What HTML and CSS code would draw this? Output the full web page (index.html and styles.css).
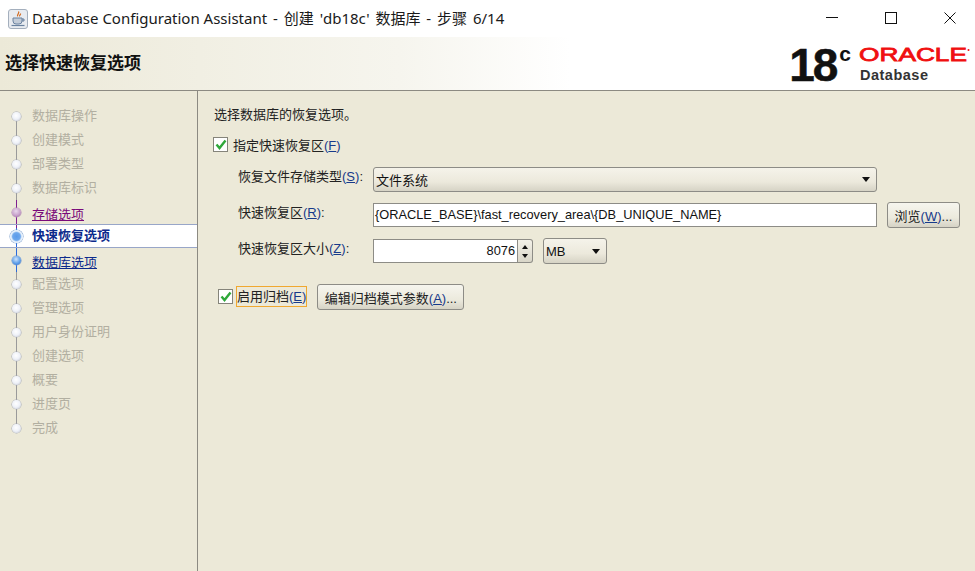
FILE: index.html
```html
<!DOCTYPE html>
<html lang="zh">
<head>
<meta charset="utf-8">
<title>Database Configuration Assistant</title>
<link rel="stylesheet" href="styles.css">
</head>
<body>
<div class="window">
  <header class="titlebar">
    <svg class="app-icon" width="22" height="22" viewBox="0 0 22 22">
      <rect x="1.500" y="1.500" width="19" height="19" rx="2.500" fill="#e8ebf0" stroke="#a4afbd"/>
      <path d="M11.500 3.500c1.500 1.500-2 3-.8 4.800M13.500 5.500c.6 1-1.500 1.800-.8 2.800" fill="none" stroke="#d2691e" stroke-width="1.200"/>
      <path d="M6 10h9v3a3 3 0 0 1-3 3H9a3 3 0 0 1-3-3zM15 11h2v2h-2" fill="#c3ccd8" stroke="#6a82a0"/>
      <path d="M4.500 17.500h13" stroke="#6a82a0" stroke-width="1.200"/>
    </svg>
    <span class="title-text">Database Configuration Assistant<span class="title-rest"> - 创建 'db18c' 数据库 - 步骤 6/14</span></span>
    <div class="winbtns">
      <svg width="12" height="12" viewBox="0 0 12 12"><path d="M0 5.500h12" stroke="#111"/></svg>
      <svg width="12" height="12" viewBox="0 0 12 12"><rect x=".5" y=".5" width="11" height="11" fill="none" stroke="#111"/></svg>
      <svg width="12" height="12" viewBox="0 0 12 12"><path d="M.5.500l11 11M11.500.500l-11 11" stroke="#111"/></svg>
    </div>
  </header>

  <section class="banner">
    <h1 class="banner-title">选择快速恢复选项</h1>
    <div class="brand">
      <span class="ver">18</span>
      <span class="ver-c">c</span>
      <div class="oracle">
        <svg class="oracle-word" width="112" height="22" viewBox="0 0 112 22">
          <text x="0" y="19" textLength="108" lengthAdjust="spacingAndGlyphs" class="oracle-text">ORACLE</text>
          <circle cx="109.500" cy="8" r="1" fill="#f01010"/>
        </svg>
        <span class="database">Database</span>
      </div>
    </div>
  </section>

  <main class="body">
    <nav class="steps">
      <div class="step off first">数据库操作</div>
      <div class="step off">创建模式</div>
      <div class="step off">部署类型</div>
      <div class="step off">数据库标识</div>
      <div class="step visited"><a>存储选项</a></div>
      <div class="step current">快速恢复选项</div>
      <div class="step next"><a>数据库选项</a></div>
      <div class="step off">配置选项</div>
      <div class="step off">管理选项</div>
      <div class="step off">用户身份证明</div>
      <div class="step off">创建选项</div>
      <div class="step off">概要</div>
      <div class="step off">进度页</div>
      <div class="step off last">完成</div>
    </nav>

    <section class="content">
      <p class="intro">选择数据库的恢复选项。</p>
      <label class="check-row">
        <span class="check"><svg width="12" height="11" viewBox="0 0 12 11"><path d="M1.500 5.500l3 3.500L10.500 1.500" fill="none" stroke="#2fa83a" stroke-width="2.400"/></svg></span>
        <span>指定快速恢复区<span class="mn">(<u>F</u>)</span></span>
      </label>

      <div class="form">
        <label class="lbl">恢复文件存储类型<span class="mn">(<u>S</u>)</span>:</label>
        <div class="combo wide"><span>文件系统</span><i class="caret"></i></div>
        <span></span>

        <label class="lbl">快速恢复区<span class="mn">(<u>R</u>)</span>:</label>
        <div class="input">{ORACLE_BASE}\fast_recovery_area\{DB_UNIQUE_NAME}</div>
        <button class="btn browse">浏览<span class="mn">(<u>W</u>)</span>...</button>

        <label class="lbl">快速恢复区大小<span class="mn">(<u>Z</u>)</span>:</label>
        <div class="size-row">
          <div class="input num">8076</div>
          <div class="spin"><i class="up"></i><i class="down"></i></div>
          <div class="combo unit"><span>MB</span><i class="caret"></i></div>
        </div>
        <span></span>
      </div>

      <div class="archive-row">
        <span class="check"><svg width="12" height="11" viewBox="0 0 12 11"><path d="M1.500 5.500l3 3.500L10.500 1.500" fill="none" stroke="#2fa83a" stroke-width="2.400"/></svg></span>
        <span class="focus-label">启用归档<span class="mn">(<u>E</u>)</span></span>
        <button class="btn edit">编辑归档模式参数<span class="mn">(<u>A</u>)</span>...</button>
      </div>
    </section>
  </main>
</div>
</body>
</html>
```
FILE: styles.css
```css
* { box-sizing: border-box; }
html, body { margin: 0; padding: 0; }
body { width: 975px; height: 571px; overflow: hidden; background: #ece9d8; font-family: "Liberation Sans", "Noto Sans CJK SC", sans-serif; font-size: 13px; color: #222; }
.window { display: flex; flex-direction: column; width: 975px; height: 571px; }

.titlebar { height: 37px; flex: none; background: #fff; display: flex; align-items: center; padding-left: 7px; }
.app-icon { flex: none; margin-right: 3px; }
.title-text { font-family: "Noto Sans", "Noto Sans CJK SC", sans-serif; font-size: 15px; color: #1a1a1a; white-space: nowrap; position: relative; top: -1px; }
.title-rest { word-spacing: 2px; }
.winbtns { margin-left: auto; display: flex; gap: 47px; padding-right: 19px; position: relative; top: -1px; }

.banner { height: 54px; flex: none; border-bottom: 1px solid #8c8a82; background: linear-gradient(90deg, #ece9d8 0, #f6f5ee 400px, #fff 570px); display: flex; align-items: center; justify-content: space-between; padding-left: 5px; }
.banner-title { margin: 0; font-size: 17px; font-weight: bold; color: #111; line-height: 20px; position: relative; top: -2px; font-family: "Noto Sans CJK SC", sans-serif; }
.brand { display: flex; align-items: flex-start; padding-right: 4px; height: 50px; }
.ver { font-family: "Liberation Sans", sans-serif; font-weight: bold; font-size: 46px; line-height: 46px; letter-spacing: -2px; color: #111; margin-top: 3px; -webkit-text-stroke: .5px #111; }
.ver-c { font-family: "Liberation Sans", sans-serif; font-weight: bold; font-size: 21px; line-height: 22px; color: #111; margin: 4px 8px 0 3px; }
.oracle { display: flex; flex-direction: column; padding-top: 3px; }
.oracle-word { display: block; }
.oracle-text { font-family: "Liberation Sans", sans-serif; font-size: 19px; font-weight: normal; fill: #f01010; stroke: #f01010; stroke-width: .8px; }
.database { font-family: "Liberation Sans", sans-serif; font-weight: bold; font-size: 14.500px; line-height: 18px; color: #333; margin: 2px 0 0 1px; letter-spacing: .5px; }

.body { flex: 1; display: flex; min-height: 0; }
.steps { width: 198px; flex: none; border-right: 1px solid #8c8a82; padding-top: 13px; }
.step { position: relative; height: 24px; line-height: 24px; padding: 0 0 0 32px; color: #b2afa1; font-size: 13px; white-space: nowrap; }
.step::before { content: ""; position: absolute; left: 16px; top: 0; bottom: 0; width: 1px; background: #9a9a9a; }
.step.first::before { top: 12px; }
.step.last::before { bottom: 12px; }
.step::after { content: ""; position: absolute; left: 12px; top: 8px; width: 9px; height: 9px; border-radius: 50%; background: radial-gradient(circle at 45% 40%, #fff 0, #eef1f8 50%, #b6bac8 100%); box-shadow: 0 0 0 .5px #a9adb9; }
.step.visited { color: #7a0a7a; }
.step.visited a, .step.next a { text-decoration: underline; position: relative; top: 3px; }
.step.visited::before { background: #7f1f8f; }
.step.visited::after { background: radial-gradient(circle at 45% 35%, #e8d8ec 0, #c8a2cc 55%, #8e5a96 100%); box-shadow: 0 0 0 .5px #b18ab8; }
.step.current { color: #0c2a8c; font-weight: bold; background: #fff; border-top: 1px solid #98a6c8; border-bottom: 1px solid #98a6c8; line-height: 22px; }
.step.current::before { background: linear-gradient(#7f1f8f 0, #7f1f8f 15%, #2a6adc 15%); }
.step.current::after { left: 10px; top: 5px; width: 13px; height: 13px; background: radial-gradient(circle at 50% 50%, #5a9aea 0, #6ea8ec 42%, #e6f0fb 58%, #e6f0fb 68%, #86aad8 85%, #86aad8 100%); box-shadow: 0 0 0 .5px #7ea0cc; }
.step.next { color: #0c2a8c; }
.step.next::before { background: #2a6adc; }
.step.next::after { background: radial-gradient(circle at 45% 35%, #cfe3fa 0, #5f9fe8 55%, #2a62c4 100%); box-shadow: 0 0 0 .5px #6f96cc; }

.content { flex: 1; padding: 14px 0 0 16px; min-width: 0; }
.intro { margin: 0 0 9px; line-height: 20px; color: #222; }
.check-row { display: flex; align-items: center; gap: 5px; height: 20px; margin-left: -1px; }
.check { width: 15px; height: 15px; flex: none; border: 1px solid #85847a; background: #fff; display: flex; align-items: center; justify-content: center; }
.mn { color: #173a8a; }

.form { display: grid; grid-template-columns: 135px 504px 73px; row-gap: 10px; column-gap: 0; margin: 13px 0 0 24px; align-items: center; }
.lbl { white-space: nowrap; position: relative; top: -4px; }
.combo { height: 25px; border: 1px solid #8d8c86; border-radius: 3px; background: linear-gradient(#f5f3ea, #ece9dc 60%, #d6d3c5); display: flex; align-items: center; justify-content: space-between; padding: 0 6px 0 2px; color: #111; }
.caret { width: 0; height: 0; border-left: 4.500px solid transparent; border-right: 4.500px solid transparent; border-top: 5px solid #111; }
.input { height: 24px; border: 1px solid #8d8c86; background: #fff; line-height: 22px; padding: 0 1px; font-size: 12.800px; color: #111; white-space: nowrap; }
.btn { font-family: inherit; color: #222; border: 1px solid #8d8c86; border-radius: 3px; background: linear-gradient(#f6f5ee, #eceadd 60%, #d6d3c5); padding: 0; font-size: 13px; white-space: nowrap; }
.browse { height: 26px; width: 73px; margin-left: 10px; }
.size-row { display: flex; align-items: center; }
.num { width: 145px; text-align: right; padding-right: 2px; flex: none; }
.spin { width: 15px; height: 24px; border: 1px solid #8d8c86; border-left: none; border-radius: 0 3px 3px 0; background: linear-gradient(#f3f1e8, #d9d6c8); display: flex; flex-direction: column; align-items: center; justify-content: center; gap: 5px; }
.up { width: 0; height: 0; border-left: 3.500px solid transparent; border-right: 3.500px solid transparent; border-bottom: 4px solid #111; }
.down { width: 0; height: 0; border-left: 3.500px solid transparent; border-right: 3.500px solid transparent; border-top: 4px solid #111; }
.unit { width: 64px; margin-left: 10px; flex: none; height: 26px; }

.archive-row { display: flex; align-items: center; margin: 18px 0 0 4px; }
.focus-label { border: 1px solid #f0a830; height: 21px; line-height: 19px; padding: 0; margin-left: 3px; }
.edit { height: 26px; width: 147px; margin: 2px 0 0 10px; }
```
